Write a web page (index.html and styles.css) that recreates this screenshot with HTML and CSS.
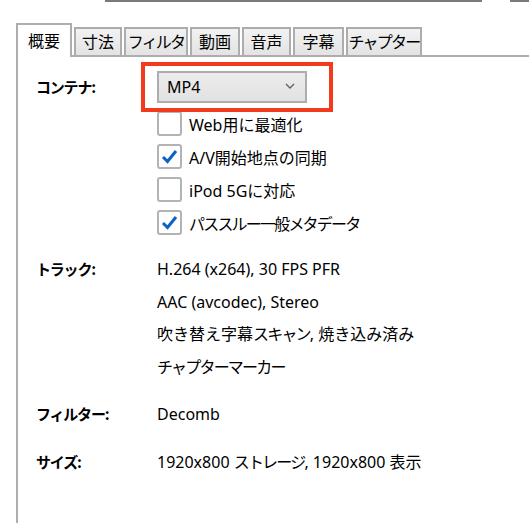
FILE: index.html
```html
<!DOCTYPE html>
<html lang="ja">
<head>
  <meta charset="UTF-8">
  <title>概要</title>
  <link rel="stylesheet" href="styles.css">
</head>
<body>
  <div class="topbar">
    <span class="topbar-seg first"></span>
    <span class="topbar-seg second"></span>
  </div>

  <div class="tabs">
    <div class="tab active w56">概要</div>
    <div class="tab w48">寸法</div>
    <div class="tab w64 kana">フィルタ</div>
    <div class="tab w50">動画</div>
    <div class="tab w49">音声</div>
    <div class="tab w51">字幕</div>
    <div class="tab w76 kana">チャプター</div>
  </div>

  <div class="panel">
    <div class="row container-row">
      <div class="label">コンテナ:</div>
      <div class="value">
        <div class="select">
          <span>MP4</span>
          <svg class="chevron" width="10" height="6" viewBox="0 0 10 6"><path d="M1 1 L5 5 L9 1" fill="none" stroke="#606060" stroke-width="1.3"/></svg>
        </div>
        <div class="checks">
          <label class="check"><span class="box"></span>Web用に最適化</label>
          <label class="check"><span class="box on"><svg width="21" height="21" viewBox="0 0 21 21"><path d="M4 11 L8.5 15.5 L17 5" fill="none" stroke="#0a62c4" stroke-width="3"/></svg></span>A/V開始地点の同期</label>
          <label class="check"><span class="box"></span>iPod 5Gに対応</label>
          <label class="check"><span class="box on"><svg width="21" height="21" viewBox="0 0 21 21"><path d="M4 11 L8.5 15.5 L17 5" fill="none" stroke="#0a62c4" stroke-width="3"/></svg></span><span class="kana">パススルー一般メタデータ</span></label>
        </div>
      </div>
    </div>

    <div class="row track-row">
      <div class="label">トラック:</div>
      <div class="value lines">
        <div>H.264 (x264), 30 FPS PFR</div>
        <div>AAC (avcodec), Stereo</div>
        <div>吹き替え字幕<span class="kana">スキャン</span>, 焼き込み済み</div>
        <div class="kana">チャプターマーカー</div>
      </div>
    </div>

    <div class="row">
      <div class="label">フィルター:</div>
      <div class="value lines"><div>Decomb</div></div>
    </div>

    <div class="row">
      <div class="label">サイズ:</div>
      <div class="value lines"><div>1920x800 <span class="kana">ストレージ</span>, 1920x800 表示</div></div>
    </div>
  </div>

  <div class="highlight"></div>
</body>
</html>
```

FILE: styles.css
```css
body {
  margin: 0;
  background: #fff;
  color: #000;
  font-family: "Noto Sans", "Noto Sans CJK JP", sans-serif;
  font-size: 16px;
  height: 523px;
  overflow: hidden;
  position: relative;
  display: flex;
  flex-direction: column;
}
.topbar {
  display: flex;
  height: 2px;
  flex: none;
}
.topbar-seg {
  display: block;
  height: 2px;
  background: #7a7a7a;
}
.topbar-seg.first {
  margin-left: 105px;
  width: 377px;
}
.topbar-seg.second {
  margin-left: 28px;
  flex: 1;
}
.tabs {
  display: flex;
  align-items: flex-end;
  margin: 21px 0 0 16px;
  gap: 2px;
  position: relative;
  z-index: 1;
  flex: none;
}
.tab {
  box-sizing: border-box;
  font-family: "Noto Sans CJK JP", sans-serif;
  font-size: 16px;
  height: 28px;
  line-height: 25px;
  text-align: center;
  white-space: nowrap;
  border: 2px solid #adadad;
  border-bottom: none;
  background: linear-gradient(#f2f2f2, #e3e3e3);
}
.tab.active {
  height: 34px;
  line-height: 31px;
  background: #fff;
  margin-bottom: -2px;
}
.w56 { width: 56px; }
.w48 { width: 48px; }
.w64 { width: 64px; }
.w50 { width: 50px; }
.w49 { width: 49px; }
.w51 { width: 51px; }
.w76 { width: 76px; }
.kana {
  letter-spacing: -1.8px;
}
.panel {
  flex: 1;
  margin-left: 16px;
  border-top: 2px solid #adadad;
  border-left: 2px solid #adadad;
  padding: 14px 0 0 18px;
}
.row {
  display: grid;
  grid-template-columns: 121px 1fr;
  margin-bottom: 15px;
}
.label {
  font-family: "Noto Sans CJK JP", sans-serif;
  font-size: 15px;
  font-weight: bold;
  letter-spacing: -1.2px;
  line-height: 32px;
}
.container-row {
  margin-bottom: 18px;
}
.select {
  box-sizing: border-box;
  width: 150px;
  height: 32px;
  border: 2px solid #adadad;
  background: linear-gradient(#ececec, #e2e2e2);
  display: flex;
  align-items: center;
  justify-content: space-between;
  padding: 0 10px 0 8px;
  font-size: 16px;
}
.chevron {
  margin-top: -2px;
}
.checks {
  display: flex;
  flex-direction: column;
  gap: 8px;
  margin-top: 8px;
}
.check {
  display: flex;
  align-items: center;
  gap: 7px;
  height: 25px;
  font-size: 16px;
}
.box {
  box-sizing: border-box;
  width: 25px;
  height: 25px;
  border: 2px solid #b3b3b3;
  border-radius: 3px;
  background: #fff;
  display: flex;
  align-items: center;
  justify-content: center;
}
.lines {
  line-height: 32.5px;
}
.track-row {
  margin-bottom: 15px;
}
.highlight {
  position: absolute;
  left: 141px;
  top: 62px;
  width: 192px;
  height: 50px;
  box-sizing: border-box;
  border: 4px solid #f23a1c;
  z-index: 2;
}
```
